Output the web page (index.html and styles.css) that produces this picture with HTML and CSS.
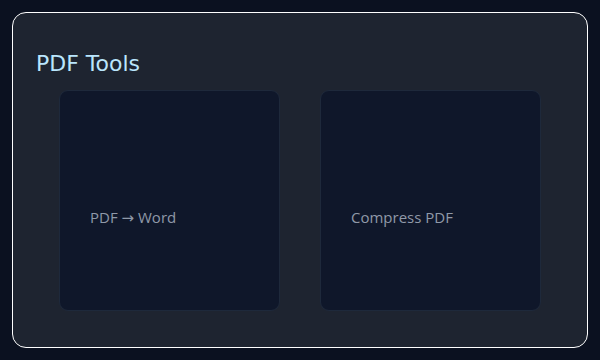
FILE: index.html
```html
<!DOCTYPE html>
<html>
<head>
<meta charset="utf-8">
<link rel="stylesheet" href="styles.css">
</head>
<body>
<div class="panel">
  <h1 class="title">PDF Tools</h1>
  <div class="grid">
    <div class="card"><span class="label">PDF → Word</span></div>
    <div class="card"><span class="label">Compress PDF</span></div>
  </div>
</div>
</body>
</html>
```
FILE: styles.css
```css
html, body { margin: 0; padding: 0; }
body {
  background: #0b1120;
  width: 600px;
  height: 360px;
  padding: 12px;
  box-sizing: border-box;
  font-family: "DejaVu Sans", sans-serif;
}
.panel {
  box-sizing: border-box;
  width: 576px;
  height: 336px;
  border: 1px solid #ffffff;
  border-radius: 14px;
  background: #1e2430;
  padding: 36px 0 0 0;
}
.title {
  margin: 0 0 0 23px;
  font-weight: normal;
  font-size: 22px;
  line-height: 30px;
  color: #bae6fd;
}
.grid {
  margin-top: 11px;
  display: flex;
  justify-content: center;
  gap: 40px;
}
.card {
  box-sizing: border-box;
  width: 221px;
  height: 221px;
  background: #0f172a;
  border: 1px solid #1e293b;
  border-radius: 9px;
  display: flex;
  align-items: center;
  padding: 32px 30px 0 30px;
}
.label {
  font-family: "Open Sans", "DejaVu Sans", sans-serif;
  font-size: 15px;
  color: #8f99a8;
}
```
